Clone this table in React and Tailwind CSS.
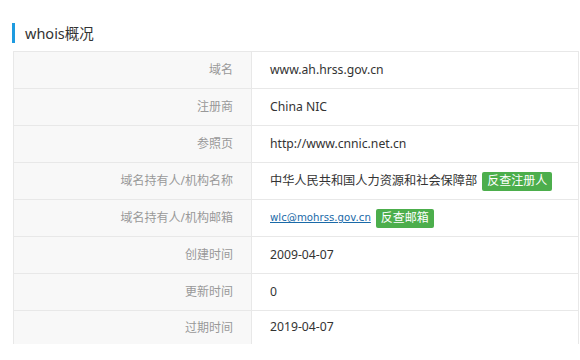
import React from 'react';

const rows = [
  { label: '域名', value: 'www.ah.hrss.gov.cn' },
  { label: '注册商', value: 'China NIC' },
  { label: '参照页', value: 'http://www.cnnic.net.cn' },
  { label: '域名持有人/机构名称', value: '中华人民共和国人力资源和社会保障部', action: '反查注册人' },
  { label: '域名持有人/机构邮箱', email: 'wlc@mohrss.gov.cn', action: '反查邮箱' },
  { label: '创建时间', value: '2009-04-07' },
  { label: '更新时间', value: '0' },
  { label: '过期时间', value: '2019-04-07' },
];

const font = { fontFamily: '"Noto Sans", "Noto Sans CJK SC", sans-serif' };

const App = () => {
  return (
    <div className="w-[580px] h-[360px] bg-white overflow-hidden" style={font}>
      <div className="flex items-center h-[20px] mt-[23px] ml-[12px]">
        <div className="w-[3px] h-[20px] bg-[#1e9be0]" />
        <h2 className="ml-[10px] text-[14.5px] text-[#333] leading-none">whois概况</h2>
      </div>
      <div className="ml-[13px] mt-[8px] w-[566px] border-t border-l border-r border-[#e8e8e8]">
        {rows.map((row, i) => (
          <div
            key={row.label}
            className={`flex ${i === rows.length - 1 ? 'h-[33px]' : 'h-[37px] border-b border-[#e8e8e8]'}`}
          >
            <div className="w-[238px] shrink-0 bg-[#f8f8f8] border-r border-[#e8e8e8] flex items-center justify-end pr-[18px] text-[12px] text-[#999]">
              {row.label}
            </div>
            <div className="flex-1 min-w-0 flex items-center pl-[18px] gap-[5px] text-[12.2px] text-[#333] whitespace-nowrap">
              {row.email ? (
                <a href="#" className="text-[10.2px] text-[#1a6aa8] underline" style={{ fontFamily: '"DejaVu Sans", sans-serif' }}>
                  {row.email}
                </a>
              ) : (
                <span>{row.value}</span>
              )}
              {row.action && (
                <span className="bg-[#4cae4c] text-white text-[12px] h-[19px] px-[5px] rounded-[2px] flex items-center leading-none">
                  {row.action}
                </span>
              )}
            </div>
          </div>
        ))}
      </div>
    </div>
  );
};

export default App;
